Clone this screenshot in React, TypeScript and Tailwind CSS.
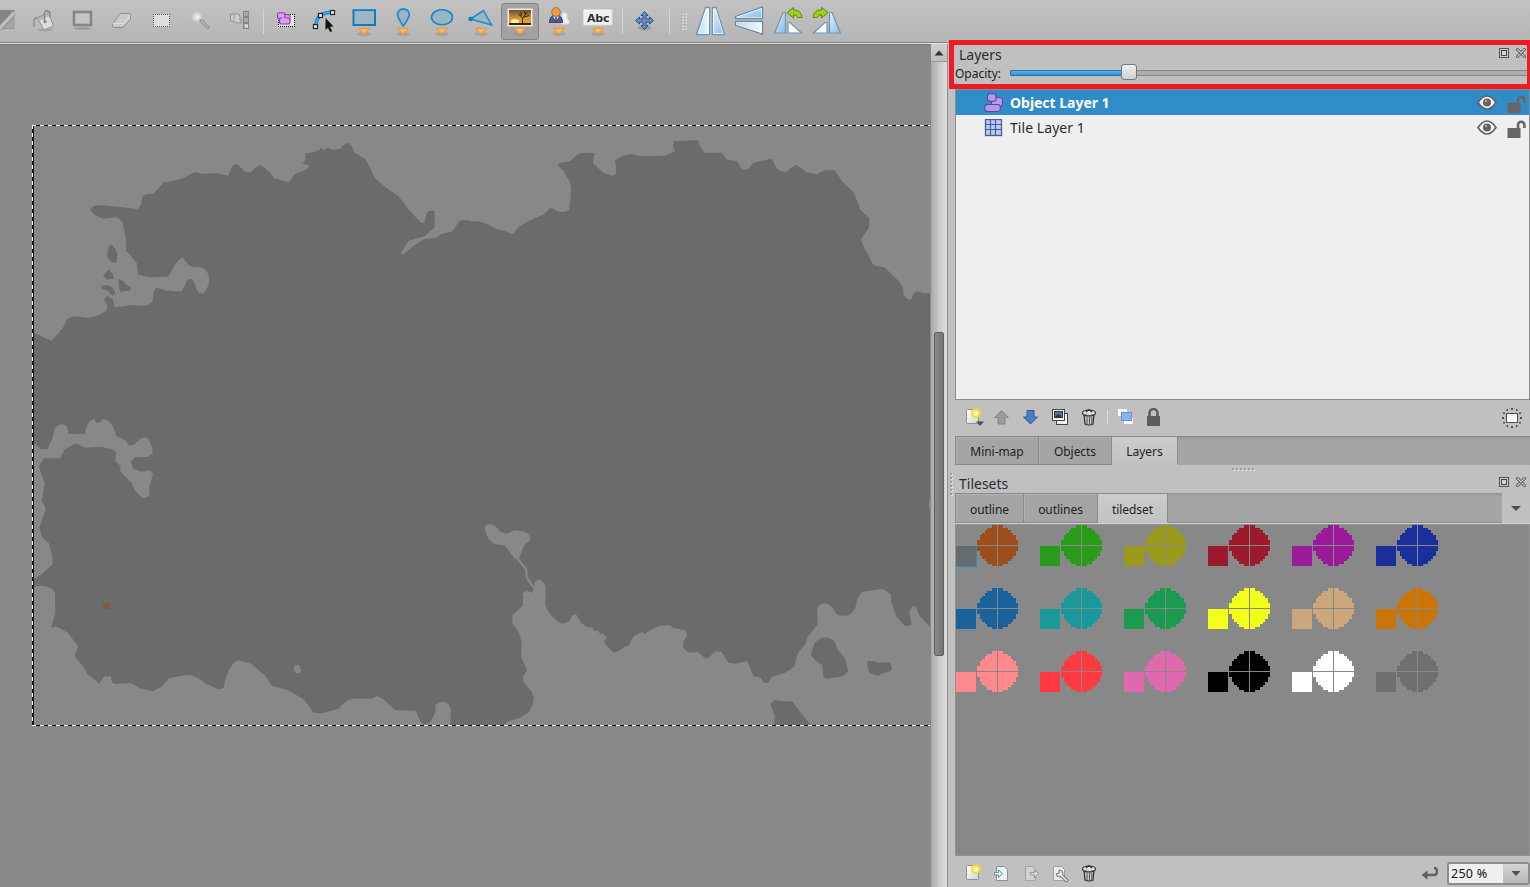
import type { ReactNode } from "react";

type Child = { children?: ReactNode };

/* Toolbar slot: children are drawn in window coordinates. */
function Slot({ x, w = 39, children }: Child & { x: number; w?: number }) {
  return (
    <svg className="block shrink-0" width={w} height={42} viewBox={`${x} 0 ${w} 42`}>
      {children}
    </svg>
  );
}

function Glyph({ x, y, w, h, children }: Child & { x: number; y: number; w: number; h: number }) {
  return (
    <svg className="block shrink-0" width={w} height={h} viewBox={`${x} ${y} ${w} ${h}`}>
      {children}
    </svg>
  );
}

function Drop({ x }: { x: number }) {
  return (
    <g>
      <ellipse cx={x} cy={34} rx={7} ry={2} fill="#8f8f8f" opacity={0.45} />
      <path d={`M${x - 5.500} 28.300h11l-5.500 5.700z`} fill="#ffbd69" stroke="#ee9a45" strokeWidth={1.200} strokeLinejoin="round" />
    </g>
  );
}

function Defs() {
  return (
    <svg width={0} height={0} className="absolute">
      <defs>
        <linearGradient id="ice" x1="0" y1="0" x2="1" y2="0">
          <stop offset="0" stopColor="#b4d8e8" />
          <stop offset="1" stopColor="#f1fbfd" />
        </linearGradient>
        <linearGradient id="sky" x1="0" y1="0" x2="1" y2="1">
          <stop offset="0" stopColor="#e4f3fd" />
          <stop offset="1" stopColor="#86b9e6" />
        </linearGradient>
        <linearGradient id="sunset" x1="0" y1="0" x2="0" y2="1">
          <stop offset="0" stopColor="#5d5037" />
          <stop offset="0.550" stopColor="#dc9631" />
          <stop offset="0.850" stopColor="#f0a02a" />
          <stop offset="1" stopColor="#2e2114" />
        </linearGradient>
        <linearGradient id="paper" x1="0" y1="0" x2="1" y2="1">
          <stop offset="0" stopColor="#ffffff" />
          <stop offset="1" stopColor="#d3d3ce" />
        </linearGradient>
        <radialGradient id="glow">
          <stop offset="0" stopColor="#f5f5f5" />
          <stop offset="0.4" stopColor="#dedede" />
          <stop offset="1" stopColor="#dedede" stopOpacity="0" />
        </radialGradient>
      </defs>
    </svg>
  );
}

function Toolbar() {
  return (
    <header className="flex h-[44px] shrink-0 items-start overflow-hidden border-b border-[#e0e0e0] bg-linear-to-b from-[#c2c2c2] to-[#b5b5b5] shadow-[inset_0_-1px_0_#858585]">
      <div className="-ml-[15px] flex">
        <Slot x={-15}>
          <rect x={-4} y={10.5} width={18} height={18} fill="#a5a5a5" stroke="#959595" />
          <path d="M-4 10h18L-1 27z" fill="#868686" />
          <path d="M14 13L-1 29" stroke="#8c8c8c" strokeWidth={5} />
          <path d="M14 13L-1 29" stroke="#cfcfcf" strokeWidth={3} />
          <path d="M14 13L-1 29" stroke="#a0a0a0" strokeWidth={0.8} />
        </Slot>
        <Slot x={24}>
          <ellipse cx={45} cy={30} rx={8} ry={1.5} fill="#a3a3a3" />
          <path d="M34 27v-7q0-2 3-2l7-3" fill="none" stroke="#8d8d8d" strokeWidth={1.300} />
          <path d="M37.500 18l11-5 5 13-9.500 4z" fill="#dcdcdc" stroke="#949494" />
          <path d="M38 18l10.500-4.500 1 2.500-10.500 5z" fill="#b5b5b5" />
          <path d="M44.500 20.500v-8q2.500-3.500 5.500 0v5" fill="none" stroke="#858585" strokeWidth={1.300} />
          <circle cx={45} cy={21.500} r={1.700} fill="#8b8b8b" />
        </Slot>
        <Slot x={63}>
          <ellipse cx={82.500} cy={28.500} rx={9} ry={1.500} fill="#9c9c9c" />
          <rect x={74} y={12} width={17} height={13} fill="#c5c5c5" stroke="#868686" strokeWidth={2.600} />
        </Slot>
        <Slot x={102}>
          <path d="M112.500 24.500l6-9q1-2 3-2h8q2 0 1 2v4l-6 6q-1 2-3 2h-7q-3 0-2-3z" fill="#c8c8c8" stroke="#8f8f8f" />
          <path d="M113 23.500h9q2 0 3-1l5-7" fill="none" stroke="#e2e2e2" />
        </Slot>
        <Slot x={141}>
          <g shapeRendering="crispEdges">
            <rect x={153} y={14} width={17} height={13} fill="#dedede" />
            <path d="M153 14.500h17M153 26.500h17M153.500 14v13M169.500 14v13" stroke="#555" strokeDasharray="1 1" />
          </g>
        </Slot>
        <Slot x={180}>
          <circle cx={197} cy={17} r={6} fill="url(#glow)" />
          <path d="M201 20.500l7 7" stroke="#858585" strokeWidth={3} strokeLinecap="round" />
          <path d="M201 20.500l7 7" stroke="#c1c1c1" strokeWidth={1.200} strokeLinecap="round" />
        </Slot>
        <Slot x={219}>
          <rect x={243.500} y={11.500} width={5} height={17} fill="#a9a9a9" stroke="#858585" />
          <path d="M243 17h6M243 23h6" stroke="#858585" strokeWidth={2} />
          <path d="M245 26h3" stroke="#ddd" strokeWidth={3} />
          <path d="M230.500 14v7h4l2 2h3l3-3-2-2-2-4z" fill="#ccc" stroke="#929292" />
          <path d="M234 14v6M239 18l3 6" stroke="#9c9c9c" />
        </Slot>
      </div>
      <div className="mt-[9px] ml-[5px] h-[25px] w-[4px] border-l border-[#d5d5d5]" />
      <div className="flex">
        <Slot x={267}>
          <g shapeRendering="crispEdges">
            <rect x={278} y={14} width={17} height={13} fill="#e4e4e4" />
            <path d="M278 14.500h17M278 26.500h17M278.500 14v13M294.500 14v13" stroke="#000" strokeDasharray="1 1" />
          </g>
          <g fill="#e09bf0" stroke="#80439b" strokeWidth={1.100}>
            <rect x={283.500} y={14.500} width={6.500} height={6} rx={2} />
            <rect x={277.500} y={12.800} width={7.500} height={6} rx={2} />
            <rect x={279.500} y={18} width={10.500} height={6} rx={2} />
          </g>
          <path d="M282 17.800l3.500 1.500" stroke="#e09bf0" strokeWidth={2.500} />
        </Slot>
        <Slot x={306}>
          <path d="M315.500 26Q317 18 320 15.500T332 12" fill="none" stroke="#087ac4" strokeWidth={3.500} />
          <path d="M315.500 26Q317 18 320 15.500T332 12" fill="none" stroke="#23b0ff" strokeWidth={2} />
          <g fill="#eee" stroke="#222" strokeWidth={1.200}>
            <rect x={313.500} y={24.500} width={4} height={4} />
            <rect x={318.500} y={13.500} width={4} height={4} />
            <rect x={330.500} y={10.500} width={4} height={4} />
          </g>
          <path d="M325.500 18v12l2.500-2.300 2 4.300 2.200-.9-2.200-4.400 3.500-.3z" fill="#111" />
        </Slot>
        <Slot x={345}>
          <rect x={353.500} y={10} width={21.500} height={15} fill="#9cb5c4" stroke="#157bb6" strokeWidth={2} />
          <path d="M353 9.500h22.500" stroke="#119be8" />
          <Drop x={364} />
        </Slot>
        <Slot x={384}>
          <path d="M403.300 26Q397.500 17.500 397.500 14.500a5.900 5.500 0 0 1 11.800 0q0 3-6 11.500z" fill="#9cb5c4" stroke="#1590d4" strokeWidth={1.800} />
          <Drop x={403} />
        </Slot>
        <Slot x={423}>
          <ellipse cx={442} cy={17.300} rx={10.500} ry={7.500} fill="#9cb5c4" stroke="#1686c6" strokeWidth={1.600} />
          <Drop x={442} />
        </Slot>
        <Slot x={462}>
          <path d="M470.500 19L483.500 10.500L491.500 25z" fill="#9cb5c4" stroke="#158bce" strokeWidth={1.500} />
          <circle cx={470.500} cy={19} r={2.200} fill="#0e7dc0" />
          <Drop x={481} />
        </Slot>
        <Slot x={501}>
          <rect x={501.500} y={3.500} width={37} height={36} rx={3} fill="#a2a2a2" stroke="#828282" />
          <rect x={507.500} y={8.500} width={25} height={18} fill="#f0efec" stroke="#c9c6be" strokeWidth={0.600} />
          <rect x={509} y={10} width={22} height={15} fill="url(#sunset)" />
          <ellipse cx={515} cy={21.500} rx={4} ry={2.500} fill="#fff2a2" />
          <path d="M509 24h22" stroke="#36230e" strokeWidth={2} />
          <path d="M522.500 24v-6l-4-4M522.500 18l5-6M521 16v-4M524 17l5-1.500M525.500 14.500l-1-3" fill="none" stroke="#21190f" strokeWidth={0.900} />
          <Drop x={520} />
        </Slot>
        <Slot x={540}>
          <path d="M561 24l1-10q3-3 5 0v5q4 2 1 5z" fill="#f1f1f1" stroke="#d6d6d6" />
          <path d="M549.500 22.500q0-6 4-7h5q4 1 4 7z" fill="#3b62a6" stroke="#27477d" />
          <path d="M553 16.500l3 4 3-4" fill="#eee" />
          <path d="M556 17v5" stroke="#b12020" strokeWidth={1.500} />
          <circle cx={556} cy={12} r={4.300} fill="#e99f4b" stroke="#b57125" />
          <path d="M549 22.500h13" stroke="#7d334c" />
          <Drop x={559} />
        </Slot>
        <Slot x={579}>
          <rect x={583.500} y={9.500} width={28.500} height={15.500} rx={1} fill="#f1f1f1" stroke="#dedede" />
          <text x={587} y={22} fontFamily="DejaVu Sans" fontWeight={700} fontSize={11} textLength={22.500} fill="#303334">Abc</text>
          <Drop x={598} />
        </Slot>
      </div>
      <div className="mt-[9px] ml-[4px] h-[25px] w-[3px] border-l border-[#d5d5d5]" />
      <Slot x={625}>
        <ellipse cx={644.500} cy={28} rx={7} ry={2.500} fill="#929292" opacity={0.7} />
        <path d="M644.500 11.500l3.500 4h-2v3.500h3.500v-2l4 3.500-4 3.500v-2h-3.500v3.500h2l-3.500 4-3.500-4h2v-3.500h-3.500v2l-4-3.500 4-3.500v2h3.500v-3.500h-2z" fill="#6690ca" stroke="#284f88" />
      </Slot>
      <div className="mt-[9px] ml-[5px] h-[25px] w-[12px] border-l border-[#d5d5d5]" />
      <svg className="mt-[12px] block" width={11} height={18}>
        <g fill="#d8d8d8">
          {[0, 3, 6, 9, 12, 15].map((y) => (
            <g key={y}>
              <rect x={1} y={y + 1} width={2} height={2} />
              <rect x={4} y={y + 1} width={2} height={2} />
              <rect x={0.500} y={y + 0.500} width={1} height={1} fill="#999" />
              <rect x={3.500} y={y + 0.500} width={1} height={1} fill="#999" />
            </g>
          ))}
        </g>
      </svg>
      <div className="flex">
        <Slot x={692}>
          <g stroke="#7394b2" strokeWidth={1.300}>
            <path d="M696.500 34.500l9-27h4v27z" fill="url(#ice)" />
            <path d="M712.500 34.500v-27h3.500l8.500 27z" fill="url(#sky)" />
          </g>
          <path d="M698.500 33.500l8-24.500h2v24.500zM713.500 33.500V9h2l7.500 24.500z" fill="none" stroke="#f2faff" strokeWidth={0.800} />
        </Slot>
        <Slot x={731}>
          <g stroke="#6688a8" strokeWidth={1.300}>
            <path d="M735.500 16.500L762.500 7v11.500h-27z" fill="url(#sky)" />
            <path d="M735.500 21.500h27V34l-27-9z" fill="url(#ice)" />
          </g>
          <path d="M736.500 17.300L761.500 8.500v9zM736.500 22.500h25v10l-25-8z" fill="none" stroke="#f2faff" strokeWidth={0.700} />
        </Slot>
        <Slot x={770}>
          <g stroke="#7393b2" strokeWidth={1.200}>
            <path d="M774.500 33l8.500-20.500h2.500V33z" fill="url(#sky)" />
            <path d="M788 33V22.500h2L801.500 33z" fill="#f5fafd" />
          </g>
          <path d="M787 12.500l6.500-5v2.500q7.500-.5 8.500 7.500h-4.500q-1-3-4-2.500v3z" fill="#9bd414" stroke="#5d8615" strokeLinejoin="round" />
        </Slot>
        <Slot x={809}>
          <g stroke="#7393b2" strokeWidth={1.200}>
            <path d="M840.500 33l-8.500-20.500h-2.500V33z" fill="url(#sky)" />
            <path d="M827 33V22.500h-2L813.500 33z" fill="#f5fafd" />
          </g>
          <path d="M828 12.500l-6.500-5v2.500q-7.500-.5-8.500 7.500h4.500q1-3 4-2.500v3z" fill="#9bd414" stroke="#5d8615" strokeLinejoin="round" />
        </Slot>
      </div>
    </header>
  );
}

function MapCanvas() {
  return (
    <svg className="block shrink-0" width={931} height={843} viewBox="0 44 931 843">
      <rect x={0} y={44} width={931} height={843} fill="#888888" />
      <rect x={0} y={44} width={931} height={1} fill="#777" />
      <rect x={34} y={126} width={896} height={599} fill="#6b6b6b" />
      <g fill="#888888" strokeLinejoin="round">
        <path transform="translate(0 110) scale(.333333)" d="M102 48V668L130 682L155 692L188 655L200 630Q212 619 225 619L265 623L290 618L320 602L322 585L313 570L320 558L338 568L344 592L400 585L424 588L445 584L457 575L461 548Q466 532 472 533L495 541L543 545L553 530Q560 506 572 506Q583 508 590 540Q600 555 612 549Q624 536 628 510Q626 476 600 472Q568 470 565 465L552 447L545 443L525 463L512 488L503 500L450 502L415 494L410 458L378 422V385L367 335L352 322L310 326L285 316L270 298L282 287L310 286L412 297L422 285L428 260L438 252L460 251L492 216L505 216L545 206L585 186L610 191L655 190L684 197L696 170Q708 156 720 170L735 185L752 187L770 170L783 165L812 190L822 205L867 217L885 192L920 178L930 167L908 160L915 150L917 130L945 126L950 121L957 122L964 112L970 120L985 112L996 119L1020 117Q1036 95 1048 101Q1060 112 1062 127L1097 148L1125 205L1168 240L1195 258L1225 298L1263 338L1273 338L1280 310Q1285 299 1303 303L1304 352L1275 378L1225 393L1203 430L1210 433L1245 404L1275 386L1305 385L1325 372L1357 364L1378 333L1390 330L1441 334V48z" />
        <path transform="translate(470 110) scale(.333333)" d="M0 48V334Q38 331 55 345Q72 356 98 361L127 373L150 348L180 331L222 313L240 294L250 296Q270 310 285 305L297 300L300 275L303 240L300 215L280 182L264 168L268 158L300 154Q322 132 333 129L372 129L369 160L400 188L428 197Q442 195 438 165L434 152Q454 136 485 132L505 138L585 137L615 124L609 110L612 94L683 90L690 108L703 128H755L772 150L790 151L803 155L812 173Q825 185 838 173L850 158L905 146L920 175Q935 190 952 184L965 172L980 165L1010 187L1040 193L1062 181L1095 181L1115 212L1150 247L1165 280L1170 298L1198 325V350L1173 388L1180 408L1210 465L1245 473L1285 512L1300 535L1301 555Q1315 574 1325 567L1331 548L1343 543L1358 550L1380 549V48z" />
        <g transform="translate(0 400) scale(.333333)">
          <path d="M102 128L122 148L143 147L157 115L165 85Q185 62 202 82L205 101L255 103Q260 58 284 57L288 68H300L308 57Q338 60 348 107L375 120L390 138L405 132Q432 100 445 118Q460 142 457 160L445 170L405 172L392 185L400 207L425 215L450 211L459 222L448 262L449 285Q435 302 420 287L402 268L395 248L361 215V197L346 183L348 155L335 147L300 140L257 143L227 130L195 147L180 175H132L116 198L134 250L125 303L138 327L118 382L126 412L147 430L157 470L158 492L130 518L102 538z" />
          <path d="M102 560L125 557Q160 560 165 580L166 640L160 660L153 683L172 680L205 700L218 718L234 738L224 768L250 800L262 822L298 851L312 830L333 828L336 848L348 852L392 849L420 865L458 874L485 860L508 834L560 825Q590 825 615 850L655 868L671 864L674 845Q690 790 715 780L755 792L798 830L815 857L865 871L910 898L930 922L940 938L965 940L1015 926Q1040 897 1060 896L1115 896L1132 888L1150 898L1185 930L1247 932L1262 967Q1280 980 1293 963L1307 935L1306 915Q1328 897 1345 912L1353 930L1350 975H102z" />
          <ellipse cx={892} cy={807} rx={10} ry={13} transform="rotate(-20 892 807)" />
        </g>
        <g transform="translate(470 480) scale(.333333)">
          <path d="M45 150Q42 132 58 131Q76 134 90 155L108 161L135 151L165 155Q184 164 180 182L163 195L151 225L147 236H135L103 196L75 193Q52 180 45 150z" />
          <path d="M143 236L168 268L170 292L190 322" fill="none" stroke="#888888" strokeWidth={7} />
          <path d="M100 736L115 724L150 714L175 698Q188 682 192 655L185 635L160 605V590L171 570L153 530L155 490L148 460L127 430V405L157 378L160 355L157 340L170 333L187 338L193 310Q207 285 227 318L226 375Q235 408 275 431L298 425L305 408L318 403L335 430L350 441L366 442L372 452L385 451L390 462L400 461L412 473L402 482L408 495L432 519L455 508L465 498L475 498L490 470L515 456L527 463L530 455L568 437L600 436L610 444L645 450L652 465L640 485V505L655 517H685Q705 540 716 534L735 514L755 516L775 548L795 551L832 543L850 588L872 594L882 609L894 608L905 592L945 578L973 560L983 520L1008 490L1013 470L1043 433L1041 385Q1060 355 1085 380L1100 403Q1118 412 1140 403L1155 388L1160 362L1175 335L1240 327L1262 342L1265 370L1280 410L1305 439L1325 435L1318 400Q1325 365 1340 385L1345 403L1380 440V736z" />
          <rect x={1377} y={62} width={3} height={24} />
        </g>
      </g>
      <g fill="#6b6b6b">
        <g transform="translate(0 110) scale(.333333)">
          <path d="M335 404L347 418L352 432L350 458L337 457L322 443V430L327 408z" />
          <path d="M325 479L339 492L341 508L331 506L324 510L309 498z" />
          <path d="M303 528L320 525L335 530L347 550L337 557L323 542L305 535z" />
          <path d="M355 506L370 513L379 524L392 532L390 543L370 543L364 549L357 533z" />
        </g>
        <g transform="translate(470 480) scale(.333333)">
          <path d="M1025 515L1033 490Q1060 459 1092 482L1104 510L1125 535L1135 573Q1122 592 1095 592L1070 597L1060 588L1057 556L1035 540L1023 525z" />
          <path d="M1192 543L1210 543L1225 548L1258 547Q1272 566 1260 574L1238 580L1223 587L1198 578L1192 558z" />
          <path d="M901 672L912 660L935 663L968 665L985 689L1021 733V736H912L914 706z" />
        </g>
      </g>
      <rect x={103} y={603} width={6} height={6} fill="#80593f" />
      <path d="M32 125.500H930M32.500 125V726M32 725.500H930" stroke="#fff" />
      <path d="M36 125.500H930M32.500 129V726M36 725.500H930" stroke="#000" strokeDasharray="4 4" />
      <path d="M33.500 126V725" stroke="#151515" />
    </svg>
  );
}

function ScrollBar() {
  return (
    <div className="flex w-[17px] shrink-0 flex-col items-center border-r border-[#909090] bg-linear-to-r from-[#a9a9a9] via-[#c9c9c9] to-[#dedede]">
      <div className="flex h-[18px] w-full items-center justify-center border-b border-[#999] bg-linear-to-b from-[#cfcfcf] to-[#bebebe]">
        <svg className="-ml-px" width={10} height={6}>
          <path d="M0.500 5.500L5 0.500L9.500 5.500z" fill="#333" />
        </svg>
      </div>
      <div className="mt-[270px] h-[324px] w-[10px] rounded-[2px] border border-[#606060] bg-linear-to-r from-[#8a8a8a] to-[#747474]" />
    </div>
  );
}

function DockButtons() {
  return (
    <svg className="block" width={29} height={12} viewBox="0 0 29 12">
      <rect x={0.500} y={1.500} width={9} height={9} fill="#cacaca" stroke="#555" />
      <rect x={2.500} y={3.500} width={5} height={5} fill="#d5d5d5" stroke="#444" />
      <path d="M18.500 2.500l7 7M25.500 2.500l-7 7" stroke="#555" strokeWidth={3} strokeLinecap="round" />
      <path d="M18.500 2.500l7 7M25.500 2.500l-7 7" stroke="#c9c9c9" strokeWidth={1.200} strokeLinecap="round" />
    </svg>
  );
}

function Eye() {
  return (
    <svg className="block" width={20} height={15} viewBox="0 0 20 15">
      <path d="M1 7.500Q10-5.500 19 7.500Q10 20.500 1 7.500z" fill="#f6f6f6" stroke="#626262" strokeWidth={1.700} />
      <circle cx={10} cy={7.500} r={4} fill="#626262" />
      <circle cx={9} cy={6} r={1.200} fill="#aaa" />
    </svg>
  );
}

function OpenLock() {
  return (
    <svg className="block" width={19} height={18} viewBox="0 0 19 18">
      <rect x={0.500} y={8} width={13} height={10} fill="#666" />
      <path d="M11 8V5a3.200 3.200 0 0 1 6.400 0v3" fill="none" stroke="#666" strokeWidth={2.600} />
    </svg>
  );
}

function LayerRow({ name, active, icon }: { name: string; active?: boolean; icon: ReactNode }) {
  return (
    <div className={active ? "flex h-[25px] items-center bg-[#308cc6] pl-[28px] text-white" : "flex h-[25px] items-center pl-[28px] text-[#2a2c2e]"}>
      {icon}
      <span className={active ? "ml-[6px] text-[14px] leading-[20px] font-bold tracking-[-0.02px]" : "ml-[6px] text-[14px] leading-[20px] tracking-[0.06px]"}>{name}</span>
      <div className="ml-auto flex items-center pr-[3px]">
        <Eye />
        <div className="w-[10px]" />
        <div className="pt-[2px]">
          <OpenLock />
        </div>
      </div>
    </div>
  );
}

function NewDoc({ x, y, arrow }: { x: number; y: number; arrow?: boolean }) {
  return (
    <g>
      <rect x={x + 0.500} y={y + 1.500} width={12} height={14} rx={1} fill="url(#paper)" stroke="#92928c" />
      <circle cx={x + 10} cy={y + 5} r={5} fill="#f2dd25" opacity={0.850} />
      <path d={`M${x + 10} ${y + 1.500}l1.200 2.300 2.500.3-1.800 1.800.4 2.600-2.300-1.200-2.300 1.200.4-2.600-1.800-1.800 2.500-.3z`} fill="#fffbd2" />
      {arrow && <path d={`M${x + 10} ${y + 13.500}h8l-4 4.500z`} fill="#4d4d4d" />}
    </g>
  );
}

function Trash({ x, y }: { x: number; y: number }) {
  return (
    <g>
      <path d={`M${x + 2} ${y + 5}l1 10q4 2 8 0l1-10z`} fill="#c9c9c9" stroke="#292b2b" strokeWidth={1.200} />
      <path d={`M${x + 5} ${y + 8}v7M${x + 7.500} ${y + 8}v7M${x + 9.800} ${y + 8}v7`} stroke="#444" strokeWidth={0.900} />
      <ellipse cx={x + 7} cy={y + 4} rx={6.500} ry={3} fill="#ddd" stroke="#292b2b" strokeWidth={1.200} />
      <path d={`M${x + 4} ${y + 3}q3-4 6 0`} fill="none" stroke="#333" strokeWidth={1.300} />
      <path d={`M${x + 2.500} ${y + 5.500}q4.500 2.500 9 0`} fill="none" stroke="#555" />
    </g>
  );
}

function LayerTools() {
  return (
    <div className="flex h-[36px] shrink-0 items-center justify-between pr-[7px] pl-[11px]">
      <Glyph x={966} y={400} w={196} h={36}>
        <NewDoc x={966} y={408} arrow />
        <path d="M1001.500 410.500l7 7h-3.500v6.500h-7v-6.500h-3.500z" fill="#9b9b9b" stroke="#868686" />
        <path d="M1030.500 424l7-7h-3.500v-6.500h-7v6.500h-3.500z" fill="#4b7fc4" stroke="#2c5794" />
        <rect x={1056.500} y={413.500} width={11} height={11} fill="#eee" stroke="#444" />
        <rect x={1052.500} y={409.500} width={12} height={11} fill="#f3f3f3" stroke="#444" />
        <rect x={1054.500} y={411.500} width={8} height={6} fill="#5771a0" stroke="#26344c" />
        <path d="M1055 417l3-3 3 2v2h-6z" fill="#26344c" />
        <Trash x={1082} y={409} />
        <path d="M1107.500 410v15" stroke="#dadada" />
        <rect x={1118} y={409} width={9} height={7} fill="#fafafa" />
        <rect x={1124} y={418} width={9} height={6} fill="#fafafa" />
        <rect x={1121.500} y={412.500} width={10} height={8} fill="#8cb2f0" stroke="#6a90d5" />
        <rect x={1147} y={416} width={13} height={10} fill="#5c5c5c" />
        <path d="M1149.500 416v-3a4 4 0 0 1 8 0v3" fill="none" stroke="#5c5c5c" strokeWidth={2.600} />
      </Glyph>
      <Glyph x={1502} y={407} w={21} h={20}>
        <rect x={1506.500} y={412.500} width={11} height={9} fill="#fff" stroke="#4d4d4d" />
        <g fill="#4d4d4d">
          <rect x={1511} y={407} width={2} height={2} />
          <rect x={1511} y={425} width={2} height={2} />
          <rect x={1502} y={416} width={2} height={2} />
          <rect x={1520} y={416} width={2} height={2} />
          <rect x={1506.500} y={408} width={1.500} height={2} />
          <rect x={1516} y={408} width={1.500} height={2} />
          <rect x={1506.500} y={424} width={1.500} height={2} />
          <rect x={1516} y={424} width={1.500} height={2} />
          <rect x={1503} y={411.500} width={2} height={1.500} />
          <rect x={1519} y={411.500} width={2} height={1.500} />
          <rect x={1503} y={421} width={2} height={1.500} />
          <rect x={1519} y={421} width={2} height={1.500} />
        </g>
      </Glyph>
    </div>
  );
}

function Tab({ label, width, active, tall }: { label: string; width: string; active?: boolean; tall?: boolean }) {
  const shade = active
    ? "border-t-[#8a8a8a] bg-linear-to-b from-[#cccccc] to-[#c2c2c2]"
    : "border-y-[#8a8a8a] bg-[#a5a5a5] shadow-[inset_1px_1px_0_#b1b1b1]";
  return (
    <div className={`${width} ${shade} ${tall ? "h-[30px]" : "h-[29px]"} flex shrink-0 items-center justify-center border-t border-r border-b border-r-[#8a8a8a] ${active ? "border-b-[#c2c2c2]" : ""} text-[12px] leading-[18px] tracking-[-0.05px] text-[#222]`}>
      <span className={tall ? "pt-[3px]" : "pt-[2px]"}>{label}</span>
    </div>
  );
}

const swatches = [
  "#9c4f1b", "#2b9b1b", "#9a991b", "#9b1a2e", "#9a1a99", "#1a2f9b",
  "#1a629b", "#1b999a", "#1b9b50", "#f3fe1b", "#cca77c", "#cb7407",
  "#ff8a8c", "#ff3a40", "#e069ad", "#000000", "#ffffff", "#6f6f6f",
];
const quarter = [2, 4, 5, 6, 7, 7, 8, 8];

function Swatch({ color, selected }: { color: string; selected?: boolean }) {
  return (
    <svg className="block" width={63} height={42} shapeRendering="crispEdges">
      <rect x={0} y={21} width={20} height={20} fill={selected ? "#646c6f" : color} />
      {selected && <path d="M20.500 21V41.500H0" fill="none" stroke="#308cc6" />}
      <g fill={color}>
        {quarter.map((n, i) => (
          <g key={i}>
            <rect x={41 - n * 2.5} y={i * 2.5} width={n * 2.5} height={2.5} />
            <rect x={42} y={i * 2.5} width={n * 2.5} height={2.5} />
            <rect x={41 - n * 2.5} y={38.5 - i * 2.5} width={n * 2.5} height={2.5} />
            <rect x={42} y={38.5 - i * 2.5} width={n * 2.5} height={2.5} />
          </g>
        ))}
      </g>
    </svg>
  );
}

function LayersPanel() {
  return (
    <section className="relative flex shrink-0 flex-col">
      <div className="flex h-[22px] items-center justify-between pr-[2px] pl-[4px]">
        <h2 className="text-[14px] leading-[20px] text-[#2a2c2e]">Layers</h2>
        <div className="pb-[4px]">
          <DockButtons />
        </div>
      </div>
      <div className="flex h-[23px] items-start">
        <span className="-mt-px w-[55px] text-[12px] leading-[17px] text-[#1c1c1c]">Opacity:</span>
        <div className="relative mt-[4px] h-[6px] flex-1 border-y border-[#858585] bg-[#adadad]">
          <div className="-mt-px h-[6px] w-[116px] rounded-l-[2px] border border-[#2675a8] bg-linear-to-b from-[#56b6f4] to-[#2f92d2]" />
          <div className="absolute -top-[7px] left-[111px] h-[16px] w-[16px] rounded-[3px] border border-[#777] bg-linear-to-b from-[#f0f0f0] to-[#cfcfcf]" />
        </div>
      </div>
      <div className="flex h-[311px] flex-col border border-[#8d8d8d] bg-[#efefef]">
        <LayerRow
          name="Object Layer 1"
          active
          icon={
            <svg className="block" width={20} height={20} viewBox="0 0 20 20">
              <g fill="#b399e6" stroke="#5c45a0" strokeWidth={1.100}>
                <rect x={7.500} y={4.500} width={11} height={9} rx={2.500} />
                <rect x={3.500} y={0.800} width={8.500} height={7.500} rx={2.500} />
                <rect x={0.800} y={11.500} width={15.500} height={7} rx={2.500} />
              </g>
            </svg>
          }
        />
        <LayerRow
          name="Tile Layer 1"
          icon={
            <svg className="block" width={20} height={18} viewBox="0 0 20 18">
              <rect x={1.500} y={0.500} width={16} height={16} fill="#b4ccf3" stroke="#505a94" strokeWidth={1.300} />
              <path d="M6.500 1v16M11.500 1v16M2 5.500h15M2 10.500h15" stroke="#505a94" strokeWidth={1.200} />
            </svg>
          }
        />
      </div>
      <LayerTools />
      <div className="flex h-[29px] border-t border-[#8a8a8a] bg-[#a5a5a5] shadow-[inset_0_3px_3px_-2px_#909090]">
        <div className="-mt-px flex border-l border-[#8a8a8a]">
          <Tab label="Mini-map" width="w-[83px]" />
          <Tab label="Objects" width="w-[73px]" />
          <Tab label="Layers" width="w-[66px]" active />
        </div>
      </div>
      <div className="absolute -top-[4px] -left-[6px] h-[49px] w-[581px] border-[5px] border-r-[3px] border-[#ed1c24]" />
    </section>
  );
}

function TilesetsPanel() {
  return (
    <section className="flex flex-1 flex-col">
      <div className="flex h-[8px] justify-center pl-[3px]">
        <svg className="mt-[3px] block" width={24} height={4}>
          {[0, 4, 8, 12, 16, 20].map((x) => (
            <g key={x}>
              <rect x={x + 1} y={1} width={2} height={2} fill="#e0e0e0" />
              <rect x={x} y={0} width={2} height={2} fill="#999" />
            </g>
          ))}
        </svg>
      </div>
      <div className="flex h-[20px] items-center justify-between pr-[2px] pl-[4px]">
        <h2 className="pt-[2px] text-[14px] leading-[20px] text-[#2a2c2e]">Tilesets</h2>
        <div className="pb-[2px]">
          <DockButtons />
        </div>
      </div>
      <div className="flex h-[30px]">
        <div className="flex w-[547px] border-b border-l border-[#8a8a8a] bg-[#a5a5a5] shadow-[inset_0_3px_3px_-2px_#909090]">
          <Tab label="outline" width="w-[68px]" tall />
          <Tab label="outlines" width="w-[74px]" tall />
          <Tab label="tiledset" width="w-[70px]" active tall />
        </div>
        <div className="flex flex-1 items-center justify-center">
          <svg width={10} height={5}>
            <path d="M0 0H10L5 5z" fill="#505050" />
          </svg>
        </div>
      </div>
      <div className="mt-px h-[332px] border border-[#929292] bg-[#888888] shadow-[0_-1px_0_#d0d0d0]">
        <div className="grid grid-cols-[repeat(6,63px)] gap-[21px]">
          {swatches.map((color, i) => (
            <Swatch key={color} color={color} selected={i === 0} />
          ))}
        </div>
      </div>
      <div className="flex flex-1 items-center justify-between pl-[11px]">
        <Glyph x={966} y={856} w={134} h={31}>
          <NewDoc x={966} y={864} />
          <path d="M996.500 866.500h8l3 3v11h-11z" fill="#eaf2f0" stroke="#7c9896" />
          <path d="M994.500 872.500h4v-2.500l4 3.500-4 4v-2.500h-4z" fill="#eef7f5" stroke="#67918e" />
          <path d="M1025.500 866.500h7l3 3v11h-10z" fill="#d0d0d0" stroke="#a3a3a3" />
          <path d="M1030.500 872.500h4v-2.500l4 3.500-4 4v-2.500h-4z" fill="#ddd" stroke="#959595" />
          <path d="M1053.500 866.500h8l3 3v11h-11z" fill="#ededed" stroke="#a1a1a1" />
          <path d="M1060.500 874.500l6 6" stroke="#777" strokeWidth={3.500} strokeLinecap="round" />
          <path d="M1056 874a3.500 3.500 0 1 0 3-4v3z" fill="#ddd" stroke="#777" />
          <path d="M1060.500 874.500l6 6" stroke="#eee" strokeWidth={1.600} strokeLinecap="round" />
          <Trash x={1082} y={865} />
        </Glyph>
        <div className="flex items-center">
          <svg className="mt-[3px] mr-[7px] block" width={19} height={14} viewBox="0 0 19 14">
            <path d="M6 9h7q3 0 3-3.500T13 2" fill="none" stroke="#606060" strokeWidth={2.400} />
            <path d="M0.500 9l6-4.500v9z" fill="#606060" />
          </svg>
          <div className="mt-[4px] flex h-[23px] w-[83px] items-stretch overflow-hidden rounded-[3px] border-2 border-[#8d8d8d] bg-[#efefef]">
            <span className="w-[54px] pl-[2px] text-[12.500px] leading-[20px] tracking-[0.250px] whitespace-nowrap text-[#111]">250 %</span>
            <div className="flex flex-1 items-center justify-center bg-linear-to-b from-[#d5d5d5] to-[#b8b8b8]">
              <svg width={10} height={6}>
                <path d="M0.500 0H9.500L5 5z" fill="#505050" />
              </svg>
            </div>
          </div>
        </div>
      </div>
    </section>
  );
}

export default function App() {
  return (
    <main className="flex h-[887px] w-[1530px] flex-col overflow-hidden bg-[#c0c0c0] font-['Noto_Sans','Open_Sans',sans-serif]">
      <Defs />
      <Toolbar />
      <div className="flex min-h-0 flex-1">
        <MapCanvas />
        <ScrollBar />
        <div className="flex w-[7px] shrink-0 items-center justify-center">
          <svg className="mt-[38px] block" width={4} height={24}>
            {[0, 4, 8, 12, 16, 20].map((y) => (
              <g key={y}>
                <rect x={1} y={y + 1} width={2} height={2} fill="#e0e0e0" />
                <rect x={0} y={y} width={2} height={2} fill="#999" />
              </g>
            ))}
          </svg>
        </div>
        <aside className="flex w-[575px] shrink-0 flex-col">
          <LayersPanel />
          <TilesetsPanel />
        </aside>
      </div>
    </main>
  );
}
